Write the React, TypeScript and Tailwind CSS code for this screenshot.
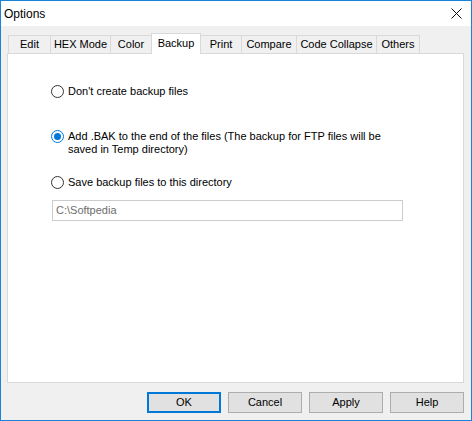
import React from 'react';

const tabs = [
  { label: 'Edit', w: 'w-[43px]' },
  { label: 'HEX Mode', w: 'w-[61px]' },
  { label: 'Color', w: 'w-[42px]' },
  { label: 'Backup', w: 'w-[50px]', active: true },
  { label: 'Print', w: 'w-[42px]' },
  { label: 'Compare', w: 'w-[56px]' },
  { label: 'Code Collapse', w: 'w-[81px]' },
  { label: 'Others', w: 'w-[44px]' },
];

const Radio: React.FC<{ checked?: boolean }> = ({ checked }) => (
  <span
    className={`flex h-[13px] w-[13px] shrink-0 items-center justify-center rounded-full border bg-white ${
      checked ? 'border-[#0078d7]' : 'border-[#333333]'
    }`}
  >
    {checked && <span className="h-[7px] w-[7px] rounded-full bg-[#0078d7]" />}
  </span>
);

const Button: React.FC<{ label: string; primary?: boolean }> = ({ label, primary }) => (
  <button
    className={`flex h-[21px] w-[74px] items-center justify-center bg-[#e1e1e1] text-[11px] text-black ${
      primary ? 'border-2 border-[#0078d7]' : 'border border-[#adadad]'
    }`}
  >
    {label}
  </button>
);

export default function App() {
  return (
    <div
      className="flex h-[421px] w-[472px] flex-col border border-[#1883d7] bg-[#f0f0f0] text-black"
      style={{ fontFamily: '"Liberation Sans", Arial, sans-serif' }}
    >
      {/* Title bar */}
      <div className="flex h-[25px] items-center justify-between bg-white pl-[3px] pr-[9px]">
        <span className="text-[12px]">Options</span>
        <svg width="11" height="11" viewBox="0 0 11 11">
          <path d="M0.5 0.5 L10.5 10.5 M10.5 0.5 L0.5 10.5" stroke="#111" strokeWidth="1" />
        </svg>
      </div>

      <div className="flex flex-1 flex-col px-[6px] pt-[7px]">
        {/* Tabs */}
        <div className="flex h-[20px] items-end pl-[1px]">
          {tabs.map((t, i) => (
            <div
              key={t.label}
              className={`${t.w} ${i > 0 ? '-ml-px' : ''} flex items-center justify-center border-[#d9d9d9] text-[11px] ${
                t.active
                  ? 'relative z-10 mb-[-1px] h-[21px] border-x border-t bg-white pb-[2px]'
                  : 'h-[18px] border-x border-t bg-[#f0f0f0]'
              }`}
            >
              {t.label}
            </div>
          ))}
        </div>

        {/* Panel */}
        <div className="flex h-[330px] w-[457px] flex-col border border-[#d9d9d9] bg-white pl-[43px] pt-[31px] text-[11px] leading-[13px]">
          <label className="flex items-center gap-[4px]">
            <Radio />
            <span>Don't create backup files</span>
          </label>

          <label className="mt-[32px] flex items-start gap-[4px]">
            <Radio checked />
            <span className="w-[335px]">
              Add .BAK to the end of the files (The backup for FTP files will be saved in Temp directory)
            </span>
          </label>

          <label className="mt-[20px] flex items-center gap-[4px]">
            <Radio />
            <span>Save backup files to this directory</span>
          </label>

          <div className="ml-[1px] mt-[11px] flex h-[21px] w-[351px] items-center border border-[#cccccc] bg-white pl-[3px] text-[#6d6d6d]">
            C:\Softpedia
          </div>
        </div>

        {/* Buttons */}
        <div className="mt-[9px] flex justify-end gap-[7px] pr-[1px]">
          <Button label="OK" primary />
          <Button label="Cancel" />
          <Button label="Apply" />
          <Button label="Help" />
        </div>
      </div>
    </div>
  );
}
